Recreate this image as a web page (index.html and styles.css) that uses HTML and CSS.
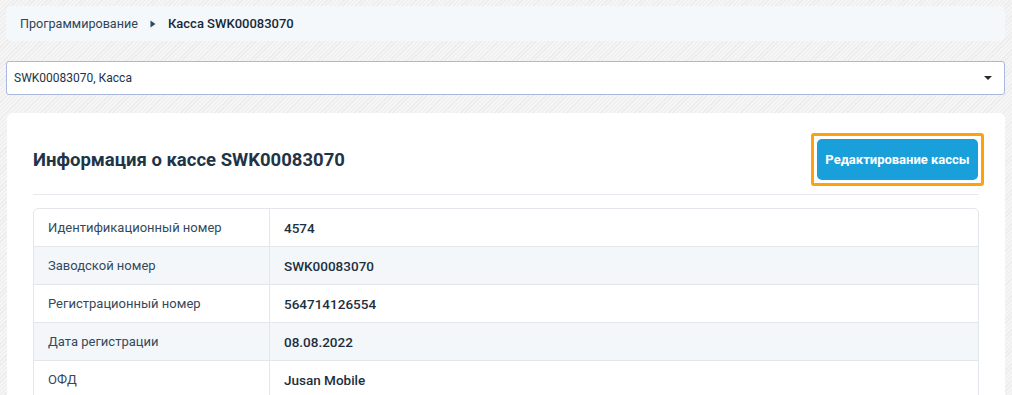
FILE: index.html
```html
<!DOCTYPE html>
<html lang="ru">
<head>
    <meta charset="UTF-8">
    <meta name="viewport" content="width=device-width, initial-scale=1.0">
    <title>Касса SWK00083070</title>
    <link rel="stylesheet" href="styles.css">
</head>
<body>

<div class="page">
    <!-- Breadcrumbs -->
    <nav class="breadcrumbs">
        <a class="crumb" href="#">Программирование</a>
        <svg class="crumb-sep" width="6" height="8" viewBox="0 0 6 8"><path d="M0.5 0.5 L5.5 4 L0.5 7.5 Z" fill="#2b4a66"/></svg>
        <span class="crumb crumb-current">Касса SWK00083070</span>
    </nav>

    <!-- Cash register select -->
    <div class="select">
        <span class="select-value">SWK00083070, Касса</span>
        <span class="select-caret"></span>
    </div>

    <!-- Info card -->
    <div class="card">
        <div class="card-header">
            <h2 class="card-title">Информация о кассе SWK00083070</h2>
            <div class="btn-focus">
                <button class="btn">Редактирование кассы</button>
            </div>
        </div>

        <table class="info-table">
            <tbody>
                <tr><td class="label">Идентификационный номер</td><td class="value">4574</td></tr>
                <tr><td class="label">Заводской номер</td><td class="value">SWK00083070</td></tr>
                <tr><td class="label">Регистрационный номер</td><td class="value">564714126554</td></tr>
                <tr><td class="label">Дата регистрации</td><td class="value">08.08.2022</td></tr>
                <tr><td class="label">ОФД</td><td class="value">Jusan Mobile</td></tr>
            </tbody>
        </table>
    </div>
</div>

</body>
</html>
```

FILE: styles.css
```css
body {
    margin: 0;
    font-family: Roboto, "Noto Sans", sans-serif;
    font-size: 13px;
    color: #1d3447;
    background-color: #f1f1f1;
    background-image: repeating-linear-gradient(135deg, #ececec 0, #ececec 1px, #f5f5f5 1px, #f5f5f5 3px);
    height: 100vh;
    overflow: hidden;
}

.page {
    padding: 6px 7px 0 6px;
}

/* Breadcrumbs */
.breadcrumbs {
    display: flex;
    align-items: center;
    height: 35px;
    padding: 0 14px;
    background-color: #f5f8fb;
    border-radius: 6px;
}

.crumb {
    font-size: 12.6px;
    color: #2f4458;
    text-decoration: none;
}

.crumb-sep {
    margin: 0 12px 0 12px;
}

.crumb-current {
    font-size: 13px;
    font-weight: 500;
    color: #16293a;
}

/* Select */
.select {
    display: flex;
    align-items: center;
    justify-content: space-between;
    height: 32px;
    margin-top: 20px;
    padding: 0 12px 0 7px;
    background-color: #fff;
    border: 1px solid #aab8dd;
    border-radius: 3px;
    font-size: 12px;
    color: #1d3447;
}

.select-caret {
    width: 0;
    height: 0;
    border-left: 4px solid transparent;
    border-right: 4px solid transparent;
    border-top: 4px solid #2a2a2a;
}

/* Card */
.card {
    margin-top: 18px;
    margin-left: 1px;
    padding: 20px 26px 0 26px;
    background-color: #fff;
    border-radius: 6px 6px 0 0;
    height: 400px;
}

.card-header {
    display: flex;
    align-items: center;
    justify-content: space-between;
    padding-bottom: 8px;
    border-bottom: 1px solid #e6e9ee;
}

.card-title {
    margin: 0;
    font-size: 18.5px;
    font-weight: 700;
    color: #1f3447;
}

.btn-focus {
    padding: 3px;
    border: 3px solid #ffa10a;
    border-radius: 3px;
    margin-right: -5px;
}

.btn {
    display: block;
    height: 41px;
    width: 161px;
    padding: 0;
    font-family: inherit;
    font-size: 13px;
    font-weight: 700;
    color: #fff;
    background-color: #199fda;
    border: 0;
    border-radius: 5px;
}

/* Info table */
.info-table {
    width: 100%;
    margin-top: 13px;
    border-collapse: separate;
    border-spacing: 0;
    border: 1px solid #e3e7ec;
    border-radius: 5px;
}

.info-table td {
    height: 37px;
    padding: 0 14px;
    border-bottom: 1px solid #e3e7ec;
}

.info-table tr:nth-child(even) td {
    background-color: #f4f7fa;
}

.info-table .label {
    width: 207px;
    color: #34495c;
    border-right: 1px solid #e3e7ec;
}

.info-table .value {
    font-size: 13.5px;
    font-weight: 500;
    color: #1d2f3f;
}
```
